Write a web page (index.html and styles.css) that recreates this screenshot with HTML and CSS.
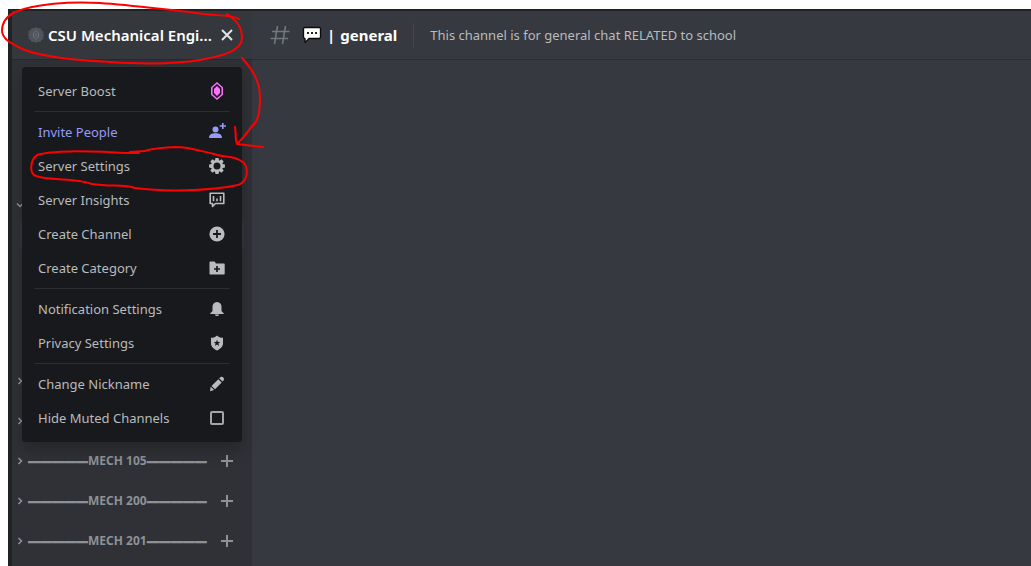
FILE: index.html
```html
<!DOCTYPE html>
<html lang="en">
<head>
<meta charset="utf-8">
<meta name="viewport" content="width=device-width, initial-scale=1">
<title>CSU Mechanical Engineering</title>
<link rel="stylesheet" href="styles.css">
</head>
<body>
<div class="app">
  <aside class="sidebar">
    <header class="server-header">
      <svg class="badge" viewBox="0 0 16 16" aria-hidden="true">
        <path fill="#4f545c" d="M8 0l2 1.3 2.4-.2 1 2.2 2.1 1.2-.2 2.4L16 8l-.7 1.6.1 2.3-2.1 1.1-1 2.1-2.3-.3L8 16l-2-1.2-2.4.3-1-2.2L.6 11.800l.1-2.3L0 8l.7-1.600-.1-2.300 2.100-1.100 1-2 2.300.300z"/>
        <path fill="none" stroke="#6d7178" d="M8 3.500l2.500 2.500v4L8 12.500 5.500 10V6zM8 6v4"/>
      </svg>
      <h1 class="server-name">CSU Mechanical Engi...</h1>
      <button class="icon-button" aria-label="Close server menu">
        <svg width="18" height="18" viewBox="0 0 18 18"><path stroke="#e3e4e6" stroke-width="2" d="M4 4l10 10M14 4L4 14"/></svg>
      </button>
    </header>

    <nav class="menu" aria-label="Server menu">
      <button class="item">Server Boost
        <svg class="icon pink" viewBox="0 0 18 18"><path fill="none" stroke="currentColor" stroke-width="1.500" d="M9 1l5.200 4.500v7L9 17l-5.200-4.500v-7z"/><path fill="currentColor" d="M9 4l3 3v4l-3 3-3-3V7z"/></svg>
      </button>
      <hr class="rule">
      <button class="item invite">Invite People
        <svg class="icon" viewBox="0 0 18 18"><circle fill="currentColor" cx="7.500" cy="6.500" r="3"/><path fill="currentColor" d="M1 15c0-3.600 2.500-4.800 6.500-4.800S14 11.400 14 15zM14 0h1.600v2.200H18v1.600h-2.400V6H14V3.800h-2.300V2.200H14z"/></svg>
      </button>
      <button class="item">Server Settings
        <svg class="icon" viewBox="0 0 18 18"><g fill="currentColor"><path id="tooth" d="M7.500 1.100h3l.8 3.500H6.700z"/><use href="#tooth" transform="rotate(45 9 9)"/><use href="#tooth" transform="rotate(90 9 9)"/><use href="#tooth" transform="rotate(135 9 9)"/><use href="#tooth" transform="rotate(180 9 9)"/><use href="#tooth" transform="rotate(225 9 9)"/><use href="#tooth" transform="rotate(270 9 9)"/><use href="#tooth" transform="rotate(315 9 9)"/></g><circle cx="9" cy="9" r="4.600" fill="none" stroke="currentColor" stroke-width="2.200"/></svg>
      </button>
      <button class="item">Server Insights
        <svg class="icon" viewBox="0 0 18 18"><path fill="none" stroke="currentColor" stroke-width="1.600" stroke-linejoin="round" d="M2.200 2.300h13.600v10.200H7.500L4.500 15.500v-3H2.200z"/><path stroke="currentColor" stroke-width="1.600" d="M5.500 5v5.300M9 7.500v2.800M12.500 5v5.300"/></svg>
      </button>
      <button class="item">Create Channel
        <svg class="icon" viewBox="0 0 18 18"><circle fill="currentColor" cx="9" cy="9" r="7.600"/><path stroke="#18191c" stroke-width="1.800" d="M9 5v8M5 9h8"/></svg>
      </button>
      <button class="item">Create Category
        <svg class="icon" viewBox="0 0 18 18"><path fill="currentColor" d="M2.500 2.500h4L8 4.500h7.700c.6 0 1 .4 1 1v9c0 .6-.4 1-1 1H2.500c-.6 0-1-.4-1-1v-11c0-.6.400-1 1-1z"/><path stroke="#18191c" stroke-width="1.700" d="M9 7v6M6 10h6"/></svg>
      </button>
      <hr class="rule">
      <button class="item">Notification Settings
        <svg class="icon" viewBox="0 0 18 18"><path fill="currentColor" d="M9 2c3 0 4.500 2.200 4.500 5v4l2.300 2.500v.5H2.200v-.5L4.500 11V7C4.500 4.200 6 2 9 2zM6.800 14.500h4.400C10.800 15.600 10 16 9 16s-1.800-.4-2.200-1.500z"/></svg>
      </button>
      <button class="item">Privacy Settings
        <svg class="icon" viewBox="0 0 18 18"><path fill="currentColor" d="M9 1.500c1.500 1.700 3.300 2.300 6 2.300v5.700c0 3.500-3 5.500-6 7-3-1.500-6-3.500-6-7V3.800c2.700 0 4.500-.6 6-2.300z"/><path fill="#18191c" d="M9 5.800l.9 2.200 2.400.1-1.900 1.500.7 2.300-2.100-1.300-2.100 1.300.7-2.300-1.900-1.500 2.400-.1z"/></svg>
      </button>
      <hr class="rule">
      <button class="item">Change Nickname
        <svg class="icon" viewBox="0 0 18 18"><path fill="currentColor" d="M12 2.500c.9-.9 2.400-.9 3.300 0s.9 2.300 0 3.200l-.8.800-3.300-3.200zM10.300 4.200l3.400 3.400-6.700 6.700-3.500-3.400zM2.700 11.700l3.400 3.300-4.100 1.300z"/></svg>
      </button>
      <label class="item">Hide Muted Channels
        <input class="check" type="checkbox">
      </label>
    </nav>

    <div class="channels">
      <div class="category open"><svg class="arrow" viewBox="0 0 8 8"><path d="M1 2.500l3 3 3-3"/></svg></div>
      <div class="channel-row"></div>
      <div class="category"><svg class="arrow" viewBox="0 0 8 8"><path d="M2.500 1l3 3-3 3"/></svg></div>
      <div class="category"><svg class="arrow" viewBox="0 0 8 8"><path d="M2.500 1l3 3-3 3"/></svg></div>
      <div class="category"><svg class="arrow" viewBox="0 0 8 8"><path d="M2.500 1l3 3-3 3"/></svg><h2 class="category-name"><span class="dash">—————</span>MECH 105<span class="dash">—————</span></h2><button class="icon-button" aria-label="Create channel in MECH 105"><svg width="18" height="18" viewBox="0 0 18 18"><path d="M9 3v12M3 9h12"/></svg></button></div>
      <div class="category"><svg class="arrow" viewBox="0 0 8 8"><path d="M2.500 1l3 3-3 3"/></svg><h2 class="category-name"><span class="dash">—————</span>MECH 200<span class="dash">—————</span></h2><button class="icon-button" aria-label="Create channel in MECH 200"><svg width="18" height="18" viewBox="0 0 18 18"><path d="M9 3v12M3 9h12"/></svg></button></div>
      <div class="category"><svg class="arrow" viewBox="0 0 8 8"><path d="M2.500 1l3 3-3 3"/></svg><h2 class="category-name"><span class="dash">—————</span>MECH 201<span class="dash">—————</span></h2><button class="icon-button" aria-label="Create channel in MECH 201"><svg width="18" height="18" viewBox="0 0 18 18"><path d="M9 3v12M3 9h12"/></svg></button></div>
    </div>
  </aside>

  <main class="main">
    <header class="channel-header">
      <svg class="hash" viewBox="0 0 20 20" aria-hidden="true"><path fill="none" stroke="#72767d" stroke-width="1.600" d="M7.500 1L4.500 19M15.500 1l-3 18M2 6.500h17.500M.5 13.500H18"/></svg>
      <h2 class="channel-name">
        <svg class="bubble" viewBox="0 0 20 18" aria-hidden="true"><path fill="#fff" stroke="#0c0c0d" stroke-width="1.300" stroke-linejoin="round" d="M2.500 1.500h15l1 1v9l-1 1H7l-4 4v-4H2.500l-1-1v-9z"/><path fill="#222" d="M5 6h2v2H5zM9 6h2v2H9zM13 6h2v2h-2z"/></svg>
        <span class="bar">|</span>general
      </h2>
      <p class="topic">This channel is for general chat RELATED to school</p>
    </header>
  </main>
</div>

<svg class="marks" width="280" height="200" viewBox="0 0 280 200" aria-hidden="true">
  <path d="M239 19C231 14 218 17 190 12C160 9 130 5 100 3C70 1 35 4 15 12C7 16 2 22 2 31C3 41 14 44 22 49C45 58 80 60 110 62C140 64 170 65 200 60C222 56 242 51 242 38C242 27 237 21 227 14"/>
  <path d="M242 58C251 68 260 80 260 97C260 108 259 121 253 125C248 131 244 138 237 144C235 139 236 132 235 127M237 144L263 147"/>
  <path d="M139 153L129 153C100 152 55 149 37 155C30 160 29 174 36 176C48 181 75 177 92 184C110 187 125 184 135 188C165 192 210 191 238 185C249 181 248 168 244 163C235 155 225 158 214 154C200 151 190 147 175 147C160 148 151 148 145 151L130 152"/>
</svg>
</body>
</html>
```
FILE: styles.css
```css
* {
  box-sizing: border-box;
}

body {
  margin: 0;
  background: #fff;
  font-family: "Noto Sans", "Open Sans", sans-serif;
  font-size: 13px;
  color: #b9bbbe;
}

h1, h2, p {
  margin: 0;
}

button {
  border: 0;
  background: none;
  font: inherit;
  color: inherit;
}

.app {
  display: flex;
  min-height: calc(100vh - 9px);
  margin: 9px 0 0 8px;
  border-top: 2px solid #202225;
  border-left: 4px solid #202225;
  background: #36393f;
}

.sidebar {
  position: relative;
  flex: 0 0 240px;
  min-width: 0;
  background: #2f3136;
}

.server-header {
  display: flex;
  align-items: center;
  height: 49px;
  padding: 0 16px;
  border-bottom: 1px solid #28292e;
  background: #34373c;
}

.badge {
  flex: none;
  width: 16px;
  height: 16px;
  margin-right: 4px;
}

.server-name {
  flex: 1;
  min-width: 0;
  overflow: hidden;
  white-space: nowrap;
  text-overflow: ellipsis;
  font-size: 15px;
  font-weight: 600;
  line-height: 20px;
  color: #fff;
}

.icon-button {
  display: flex;
  flex: none;
  padding: 0;
}

.menu {
  position: absolute;
  top: 56px;
  left: 10px;
  width: 220px;
  padding: 7px 8px;
  border-radius: 4px;
  background: #18191c;
  box-shadow: 0 8px 16px rgba(0, 0, 0, 0.24);
  z-index: 1;
}

.item {
  display: flex;
  align-items: center;
  justify-content: space-between;
  width: 100%;
  height: 34px;
  padding: 0 8px;
  line-height: 18px;
  text-align: left;
}

.invite {
  color: #949cf7;
}

.icon {
  width: 18px;
  height: 18px;
}

.pink {
  color: #ff73fa;
}

.rule {
  height: 1px;
  margin: 3px 4px;
  border: 0;
  background: #2d2e32;
}

.check {
  appearance: none;
  width: 14px;
  height: 14px;
  margin: 0 2px;
  border: 2px solid #a3a5a9;
  border-radius: 2px;
}

.channels {
  padding-top: 133px;
}

.category {
  display: flex;
  align-items: center;
  height: 40px;
  padding: 0 16px 0 4px;
  color: #8e9297;
}

.open {
  height: 24px;
}

.channel-row {
  height: 30px;
  margin: 3px 8px 111px;
  border-radius: 4px;
  background: #34373c;
}

.arrow {
  flex: none;
  width: 8px;
  height: 8px;
  margin-right: 4px;
  fill: none;
  stroke-width: 1.5;
}

.category-name {
  flex: 1;
  min-width: 0;
  white-space: nowrap;
  font-size: 12px;
  font-weight: 700;
  line-height: 16px;
}

.dash {
  font-family: "Liberation Sans", sans-serif;
  text-shadow: 0 1px currentColor;
}

.category path {
  stroke: #8e9297;
}

.icon-button path {
  stroke-width: 2;
}

.main {
  flex: 1;
  min-width: 0;
}

.channel-header {
  display: flex;
  align-items: center;
  height: 49px;
  padding: 0 18px;
  border-bottom: 1px solid #2c2e33;
}

.hash {
  flex: none;
  width: 20px;
  height: 20px;
}

.channel-name {
  display: flex;
  align-items: center;
  gap: 5px;
  margin-left: 12px;
  padding-right: 16px;
  border-right: 1px solid #44474d;
  font-size: 15px;
  font-weight: 700;
  line-height: 24px;
  color: #fff;
}

.bubble {
  width: 20px;
  height: 18px;
}

.topic {
  flex: 1;
  margin-left: 16px;
  overflow: hidden;
  white-space: nowrap;
  text-overflow: ellipsis;
}

.marks {
  position: absolute;
  top: 0;
  left: 0;
  z-index: 2;
  fill: none;
  stroke: #f00;
  stroke-width: 2;
  stroke-linecap: round;
  stroke-linejoin: round;
  pointer-events: none;
}
```
